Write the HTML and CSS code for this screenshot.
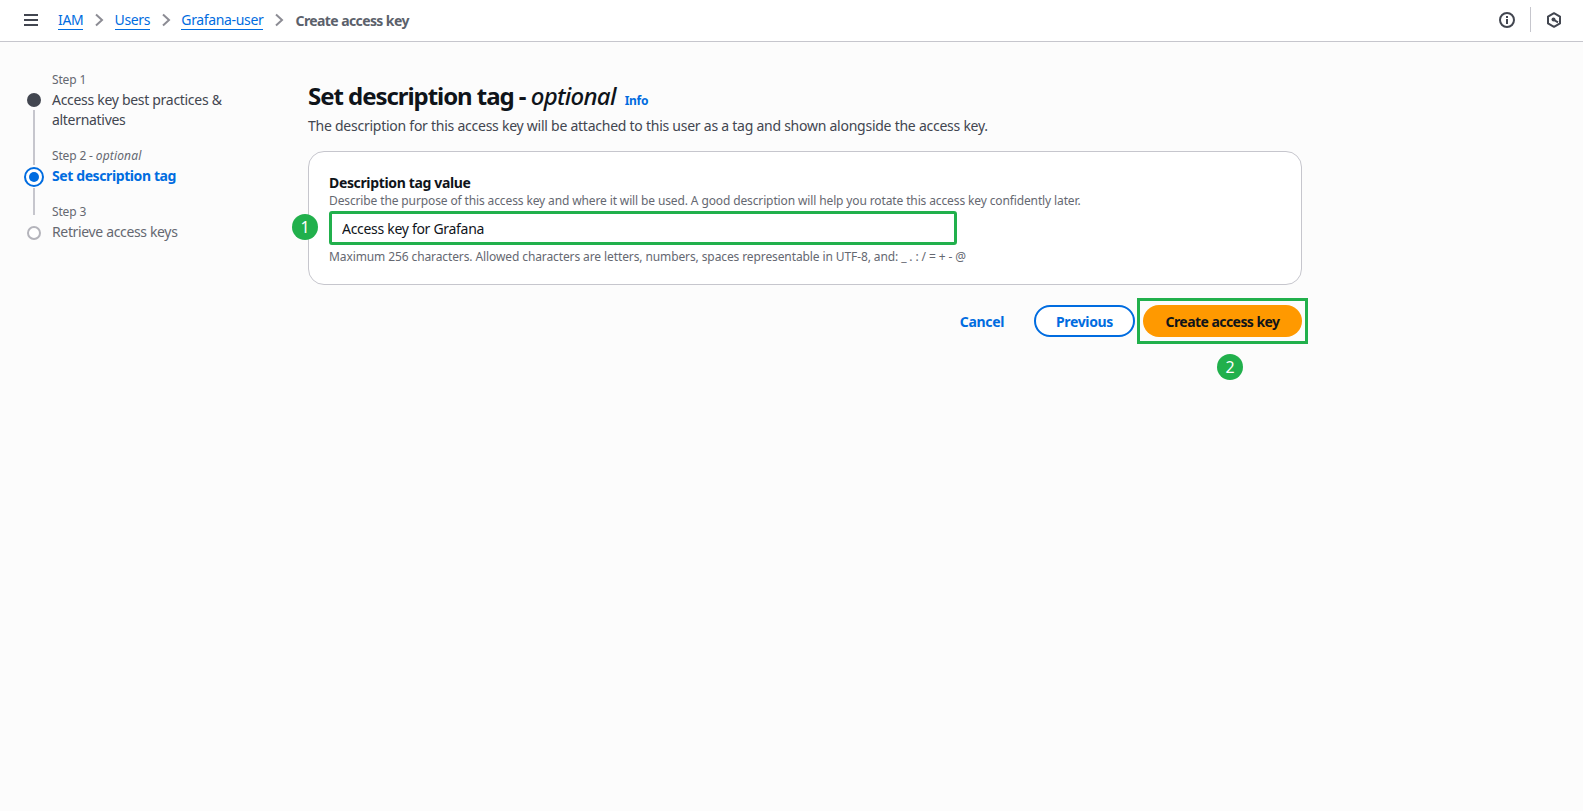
FILE: index.html
```html
<!DOCTYPE html>
<html lang="en">
<head>
<meta charset="utf-8">
<title>Create access key</title>
<link rel="stylesheet" href="styles.css">
</head>
<body>
<header class="topbar">
  <svg class="menu" width="16" height="14" viewBox="0 0 16 14" aria-hidden="true"><path d="M1 2h14M1 7h14M1 12h14" fill="none" stroke="#424650" stroke-width="2"/></svg>
  <nav class="crumbs">
    <a href="#">IAM</a>
    <svg class="chev" width="10" height="14" viewBox="0 0 10 14"><path d="M2 1.5 8 7l-6 5.5" fill="none" stroke="#8c8c94" stroke-width="2"/></svg>
    <a href="#">Users</a>
    <svg class="chev" width="10" height="14" viewBox="0 0 10 14"><path d="M2 1.5 8 7l-6 5.5" fill="none" stroke="#8c8c94" stroke-width="2"/></svg>
    <a href="#">Grafana-user</a>
    <svg class="chev" width="10" height="14" viewBox="0 0 10 14"><path d="M2 1.5 8 7l-6 5.5" fill="none" stroke="#8c8c94" stroke-width="2"/></svg>
    <span class="current">Create access key</span>
  </nav>
  <div class="tools">
    <svg width="16" height="16" viewBox="0 0 16 16"><circle cx="8" cy="8" r="7" fill="none" stroke="#424650" stroke-width="2"/><path d="M8 7v5M8 4v2" stroke="#424650" stroke-width="2" fill="none"/></svg>
    <span class="divider"></span>
    <svg width="16" height="16" viewBox="0 0 16 16"><path d="M8 1.2 14 4.6v6.8L8 14.8 2 11.4V4.6z" fill="none" stroke="#424650" stroke-width="2" stroke-linejoin="round"/><circle cx="7.5" cy="7.6" r="2" fill="#424650"/><path d="M8 8l4 2.4" stroke="#424650" stroke-width="2"/></svg>
  </div>
</header>

<div class="layout">
  <ol class="steps">
    <li class="step step-done">
      <small>Step 1</small>
      <div class="step-row"><span class="dot dot-done"></span><span class="step-title">Access key best practices &amp; alternatives</span></div>
    </li>
    <li class="step step-active">
      <small>Step 2 - <i class="step-optional">optional</i></small>
      <div class="step-row"><span class="dot dot-active"></span><span class="step-title">Set description tag</span></div>
    </li>
    <li class="step step-todo">
      <small>Step 3</small>
      <div class="step-row"><span class="dot dot-todo"></span><span class="step-title">Retrieve access keys</span></div>
    </li>
  </ol>

  <main class="content">
    <div class="heading">
      <h1>Set description tag - <i class="h1-optional">optional</i></h1>
      <a class="info" href="#">Info</a>
    </div>
    <p class="lead">The description for this access key will be attached to this user as a tag and shown alongside the access key.</p>

    <section class="card">
      <label class="label" for="tag">Description tag value</label>
      <p class="hint">Describe the purpose of this access key and where it will be used. A good description will help you rotate this access key confidently later.</p>
      <div class="field">
        <span class="badge badge-one">1</span>
        <input id="tag" class="input" type="text" value="Access key for Grafana">
      </div>
      <p class="hint hint-after">Maximum 256 characters. Allowed characters are letters, numbers, spaces representable in UTF-8, and: _ . : / = + - @</p>
    </section>

    <div class="actions">
      <a class="cancel" href="#">Cancel</a>
      <button class="btn btn-secondary" type="button">Previous</button>
      <div class="highlight">
        <button class="btn btn-primary" type="button">Create access key</button>
        <span class="badge badge-two">2</span>
      </div>
    </div>
  </main>
</div>
</body>
</html>
```
FILE: styles.css
```css
* { box-sizing: border-box; }
html, body { height: 100%; }
body {
  margin: 0;
  background: #fcfcfc;
  color: #0f141a;
  font-family: "Noto Sans", "Liberation Sans", sans-serif;
  font-size: 14px;
  overflow: hidden;
}
.topbar {
  height: 42px;
  background: #fff;
  border-bottom: 1px solid #c6c6cd;
  display: flex;
  align-items: center;
  padding: 0 21px 2px 23px;
}
.menu { flex: none; }
.crumbs { display: flex; align-items: center; margin-left: 19px; flex: 1; letter-spacing: -0.35px; padding-top: 1px; }
.crumbs a { color: #006ce0; text-decoration: none; border-bottom: 1px solid #006ce0; line-height: 18px; margin-top: 1px; }
.chev { margin: 0 10.6px; flex: none; }
.current { color: #5b616b; font-weight: 700; letter-spacing: -0.6px; margin-left: 1px; }
.tools { display: flex; align-items: center; gap: 15px; }
.divider { width: 1px; height: 25px; background: #c6c6cd; }
.layout { display: flex; padding: 28px 0 0 22px; }
.steps { list-style: none; margin: 0; padding: 0; width: 286px; flex: none; position: relative; letter-spacing: -0.3px; }
.step { padding-left: 30px; position: relative; }
.step small { display: block; font-size: 12px; line-height: 20px; color: #656871; letter-spacing: -0.15px; }
.step-optional { letter-spacing: 0.15px; }
.step-row { line-height: 20px; }
.step-done { padding-bottom: 16px; }
.step-active { padding-bottom: 16px; }
.step-title { display: block; max-width: 200px; color: #424650; }
.step-active .step-title { color: #006ce0; font-weight: 700; letter-spacing: -0.4px; }
.step-todo .step-title { color: #656871; letter-spacing: -0.35px; }
.dot { position: absolute; border-radius: 50%; }
.dot-done { left: 5px; top: 23px; width: 14px; height: 14px; background: #424650; }
.dot-done::after, .dot-active::after { content: ""; position: absolute; width: 2px; background: #c6c6cd; }
.dot-done::after { left: 6px; top: 17px; height: 55px; }
.dot-active { left: 2px; top: 21px; width: 20px; height: 20px; border: 2px solid #006ce0; background: #fff; }
.dot-active::before { content: ""; position: absolute; left: 3px; top: 3px; width: 10px; height: 10px; border-radius: 50%; background: #006ce0; }
.dot-active::after { left: 7px; top: 19px; height: 27px; }
.dot-todo { left: 5px; top: 24px; width: 14px; height: 14px; border: 2px solid #b4b4bb; background: #fff; }

.content { width: 994px; flex: none; }
.heading { display: flex; align-items: baseline; gap: 9px; margin-top: 11px; }
h1 { margin: 0; font-size: 24px; line-height: 30px; font-weight: 700; letter-spacing: -1.05px; }
.h1-optional { font-weight: 500; letter-spacing: -0.7px; }
.info { color: #006ce0; font-size: 12px; font-weight: 700; text-decoration: none; letter-spacing: -0.3px; }
.lead { margin: 5px 0 0; line-height: 20px; color: #424650; letter-spacing: -0.25px; }
.card {
  margin-top: 15px;
  height: 134px;
  background: #fff;
  border: 1px solid #c6c6cd;
  border-radius: 16px;
  padding: 22px 20px;
}
.label { display: block; font-weight: 700; line-height: 18px; letter-spacing: -0.35px; }
.hint { margin: 1px 0 0; font-size: 12px; line-height: 16px; color: #656871; letter-spacing: -0.125px; }
.field { position: relative; margin-top: 2px; width: 628px; }
.input {
  display: block; width: 100%; height: 34px;
  border: 3px solid #21b04c; border-radius: 3px;
  padding: 0 10px;
  font: inherit; color: #0f141a; background: #fff;
  letter-spacing: -0.3px;
  outline: none;
}
.hint-after { margin-top: 4px; letter-spacing: -0.105px; }
.badge {
  position: absolute; width: 26px; height: 26px; border-radius: 50%;
  background: #21b04c; color: #fff; font-size: 16px; line-height: 26px; text-align: center;
}
.badge-one { left: -37px; top: 3px; }
.badge-two { left: 77px; top: 53px; }
.actions { display: flex; justify-content: flex-end; align-items: center; margin-top: 13px; position: relative; letter-spacing: -0.35px; }
.cancel { color: #006ce0; font-weight: 700; text-decoration: none; margin-right: 30px; }
.btn {
  display: block; height: 32px; border-radius: 16px; font: inherit; font-weight: 700; letter-spacing: inherit; cursor: pointer;
}
.btn-secondary { width: 101px; background: #fff; color: #006ce0; border: 2px solid #006ce0; margin-right: 2px; }
.highlight { position: relative; border: 3px solid #21b04c; padding: 4px 3px; margin-right: -6px; }
.btn-primary { width: 159px; background: #ff9900; color: #0f141a; border: 0; letter-spacing: -0.55px; }
```
